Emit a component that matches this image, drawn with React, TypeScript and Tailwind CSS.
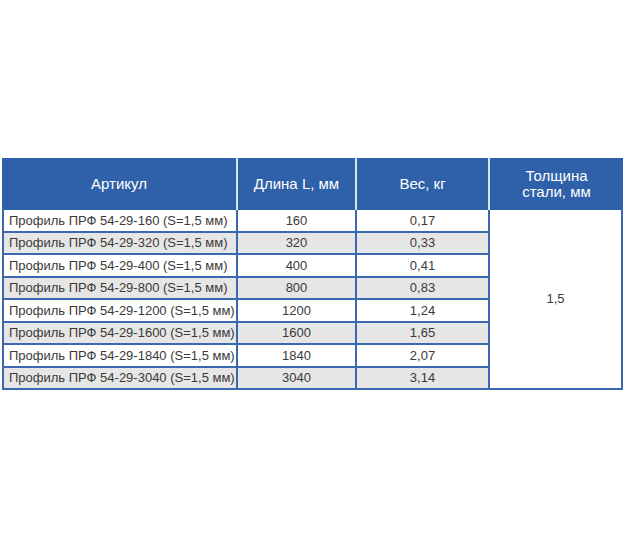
import React from "react";

const rows = [
  ["Профиль ПРФ 54-29-160 (S=1,5 мм)", "160", "0,17"],
  ["Профиль ПРФ 54-29-320 (S=1,5 мм)", "320", "0,33"],
  ["Профиль ПРФ 54-29-400 (S=1,5 мм)", "400", "0,41"],
  ["Профиль ПРФ 54-29-800 (S=1,5 мм)", "800", "0,83"],
  ["Профиль ПРФ 54-29-1200 (S=1,5 мм)", "1200", "1,24"],
  ["Профиль ПРФ 54-29-1600 (S=1,5 мм)", "1600", "1,65"],
  ["Профиль ПРФ 54-29-1840 (S=1,5 мм)", "1840", "2,07"],
  ["Профиль ПРФ 54-29-3040 (S=1,5 мм)", "3040", "3,14"],
];

export default function App() {
  return (
    <div className="w-[630px] h-[552px] bg-white pt-[158px] pl-[2px] font-['Liberation_Sans',Arial,sans-serif]">
      <div className="w-[621px]">
        <div className="flex h-[52px] bg-[#2f60aa] text-white text-[15px] leading-4">
          <div className="w-[234px] flex items-center justify-center">Артикул</div>
          <div className="w-[119px] flex items-center justify-center border-l-2 border-[#dbe4f2]">Длина L, мм</div>
          <div className="w-[133px] flex items-center justify-center border-l-2 border-[#dbe4f2]">Вес, кг</div>
          <div className="w-[135px] flex items-center justify-center text-center border-l-2 border-[#dbe4f2]">
            Толщина
            <br />
            стали, мм
          </div>
        </div>
        <div className="grid grid-cols-[232px_117px_131px_131px] grid-rows-[repeat(8,20.5px)] gap-[2px] px-[2px] pb-[2px] bg-[#3b68b1] text-[13px] text-[#3a3a3a]">
          <div className="row-start-1 row-span-8 col-start-4 bg-white flex items-center justify-center">1,5</div>
          {rows.map((r, i) => {
            const bg = i % 2 === 1 ? "bg-[#e6e6e6]" : "bg-white";
            return (
              <React.Fragment key={i}>
                <div className={`${bg} flex items-center pl-[5px] whitespace-nowrap`}>{r[0]}</div>
                <div className={`${bg} flex items-center justify-center`}>{r[1]}</div>
                <div className={`${bg} flex items-center justify-center`}>{r[2]}</div>
              </React.Fragment>
            );
          })}
        </div>
      </div>
    </div>
  );
}
